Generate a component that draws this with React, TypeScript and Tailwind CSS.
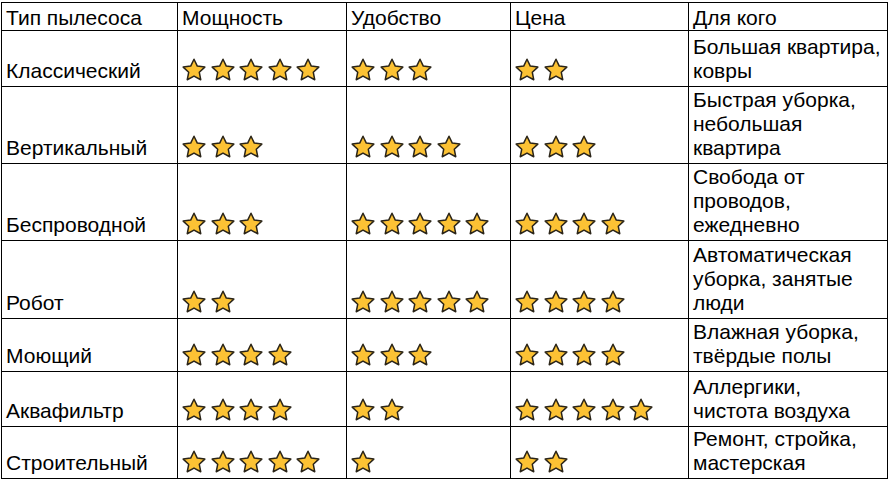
const rows = [
  { type: 'Классический', power: 5, comfort: 3, price: 2, who: ['Большая квартира,', 'ковры'], h: 'h-[56px]' },
  { type: 'Вертикальный', power: 3, comfort: 4, price: 3, who: ['Быстрая уборка,', 'небольшая', 'квартира'], h: 'h-[77px]' },
  { type: 'Беспроводной', power: 3, comfort: 5, price: 4, who: ['Свобода от', 'проводов,', 'ежедневно'], h: 'h-[77px]' },
  { type: 'Робот', power: 2, comfort: 5, price: 4, who: ['Автоматическая', 'уборка, занятые', 'люди'], h: 'h-[78px]' },
  { type: 'Моющий', power: 4, comfort: 3, price: 4, who: ['Влажная уборка,', 'твёрдые полы'], h: 'h-[53px]' },
  { type: 'Аквафильтр', power: 4, comfort: 2, price: 5, who: ['Аллергики,', 'чистота воздуха'], h: 'h-[55px]' },
  { type: 'Строительный', power: 5, comfort: 1, price: 2, who: ['Ремонт, стройка,', 'мастерская'], h: 'h-[50px]' },
]

const Star = () => (
  <svg width="24" height="24" viewBox="0 0 24 24" className="shrink-0">
    <path
      d="M12 1.2l3.3 6.9 7.5 1-5.5 5.2 1.45 7.45L12 18.1l-6.75 3.65 1.45-7.45-5.5-5.2 7.5-1z"
      fill="#FCC234"
      stroke="#2a2418"
      strokeWidth="1.5"
      strokeLinejoin="round"
    />
  </svg>
)

const Stars = ({ n }: { n: number }) => (
  <div className="flex gap-[4.5px] pb-[3px]">
    {Array.from({ length: n }).map((_, i) => (
      <Star key={i} />
    ))}
  </div>
)

const head = 'border border-black align-bottom px-[4px] pb-0'
const cell = 'border border-black align-bottom px-[4px] pb-[3px]'
const starCell = 'border border-black align-bottom px-[4px] pb-[1px]'

export default function App() {
  return (
    <div className="w-[891px] h-[480px] bg-white pt-[2px] pl-[1px] text-[21px] leading-[24px] text-black font-['Liberation_Sans',Arial,sans-serif]">
      <table className="border-collapse table-fixed w-[886px]">
        <colgroup>
          <col className="w-[176px]" />
          <col className="w-[169px]" />
          <col className="w-[164px]" />
          <col className="w-[178px]" />
          <col className="w-[199px]" />
        </colgroup>
        <thead>
          <tr className="h-[28px]">
            <td className={head}>Тип пылесоса</td>
            <td className={head}>Мощность</td>
            <td className={head}>Удобство</td>
            <td className={head}>Цена</td>
            <td className={head}>Для кого</td>
          </tr>
        </thead>
        <tbody>
          {rows.map((r) => (
            <tr key={r.type} className={r.h}>
              <td className={cell}>{r.type}</td>
              <td className={starCell}><Stars n={r.power} /></td>
              <td className={starCell}><Stars n={r.comfort} /></td>
              <td className={starCell}><Stars n={r.price} /></td>
              <td className={cell}>
                {r.who.map((l) => (
                  <div key={l} className="whitespace-nowrap">{l}</div>
                ))}
              </td>
            </tr>
          ))}
        </tbody>
      </table>
    </div>
  )
}
